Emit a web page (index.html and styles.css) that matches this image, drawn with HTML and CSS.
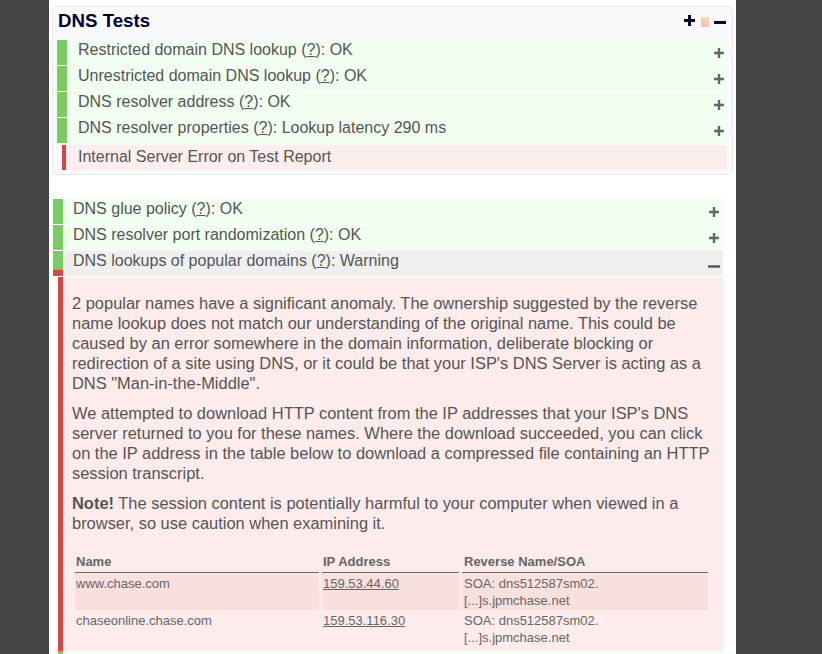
FILE: index.html
```html
<!DOCTYPE html>
<html lang="en">
<head>
    <meta charset="UTF-8">
    <title>DNS Tests</title>
    <link rel="stylesheet" href="styles.css">
</head>
<body>
<div class="page">
    <div class="panel">
        <div class="panel-head">
            <h2>DNS Tests</h2>
            <div class="tools">
                <svg class="tool-plus" width="11" height="11" viewBox="0 0 11 11"><path d="M0 5.5H11M5.5 0V11" stroke="#000033" stroke-width="3"/></svg>
                <span class="tool-box"></span>
                <svg class="tool-minus" width="12" height="3" viewBox="0 0 12 3"><path d="M0 1.5H12" stroke="#000033" stroke-width="3"/></svg>
            </div>
        </div>
        <div class="row ok">
            <span class="label">Restricted domain DNS lookup (<a href="#">?</a>): OK</span>
            <svg class="toggle" width="10" height="10" viewBox="0 0 10 10"><path d="M0 5H10M5 0V10" stroke="#666" stroke-width="2.4"/></svg>
        </div>
        <div class="row ok">
            <span class="label">Unrestricted domain DNS lookup (<a href="#">?</a>): OK</span>
            <svg class="toggle" width="10" height="10" viewBox="0 0 10 10"><path d="M0 5H10M5 0V10" stroke="#666" stroke-width="2.4"/></svg>
        </div>
        <div class="row ok">
            <span class="label">DNS resolver address (<a href="#">?</a>): OK</span>
            <svg class="toggle" width="10" height="10" viewBox="0 0 10 10"><path d="M0 5H10M5 0V10" stroke="#666" stroke-width="2.4"/></svg>
        </div>
        <div class="row ok">
            <span class="label">DNS resolver properties (<a href="#">?</a>): Lookup latency 290 ms</span>
            <svg class="toggle" width="10" height="10" viewBox="0 0 10 10"><path d="M0 5H10M5 0V10" stroke="#666" stroke-width="2.4"/></svg>
        </div>
        <div class="row err">
            <span class="label">Internal Server Error on Test Report</span>
        </div>
    </div>

    <div class="list">
        <div class="row ok">
            <span class="label">DNS glue policy (<a href="#">?</a>): OK</span>
            <svg class="toggle" width="10" height="10" viewBox="0 0 10 10"><path d="M0 5H10M5 0V10" stroke="#666" stroke-width="2.4"/></svg>
        </div>
        <div class="row ok">
            <span class="label">DNS resolver port randomization (<a href="#">?</a>): OK</span>
            <svg class="toggle" width="10" height="10" viewBox="0 0 10 10"><path d="M0 5H10M5 0V10" stroke="#666" stroke-width="2.4"/></svg>
        </div>
        <div class="row open">
            <span class="label">DNS lookups of popular domains (<a href="#">?</a>): Warning</span>
            <svg class="toggle minus" width="12" height="3" viewBox="0 0 12 3"><path d="M0 1.5H12" stroke="#555" stroke-width="2.4"/></svg>
        </div>
        <div class="detail">
            <p>2 popular names have a significant anomaly. The ownership suggested by the reverse name lookup does not match our understanding of the original name. This could be caused by an error somewhere in the domain information, deliberate blocking or redirection of a site using DNS, or it could be that your ISP's DNS Server is acting as a DNS "Man-in-the-Middle".</p>
            <p>We attempted to download HTTP content from the IP addresses that your ISP's DNS server returned to you for these names. Where the download succeeded, you can click on the IP address in the table below to download a compressed file containing an HTTP session transcript.</p>
            <p><b>Note!</b> The session content is potentially harmful to your computer when viewed in a browser, so use caution when examining it.</p>
            <table class="results">
                <tr>
                    <th class="c-name">Name</th>
                    <th class="c-ip">IP Address</th>
                    <th class="c-rev">Reverse Name/SOA</th>
                </tr>
                <tr class="odd">
                    <td>www.chase.com</td>
                    <td><a href="#">159.53.44.60</a></td>
                    <td>SOA: dns512587sm02.<br>[...]s.jpmchase.net</td>
                </tr>
                <tr>
                    <td>chaseonline.chase.com</td>
                    <td><a href="#">159.53.116.30</a></td>
                    <td>SOA: dns512587sm02.<br>[...]s.jpmchase.net</td>
                </tr>
            </table>
        </div>
        <div class="row ok tail"></div>
    </div>
</div>
</body>
</html>
```

FILE: styles.css
```css
*{
    margin: 0;
    padding: 0;
    box-sizing: border-box;
}
html, body{
    background: #444444;
    height: 100%;
}
body{
    font-family: "Liberation Sans", Arial, sans-serif;
    font-size: 16px;
    color: #555555;
}
a{
    color: #555555;
}
.page{
    background: #ffffff;
    width: 687px;
    margin-left: 49px;
    min-height: 100%;
    padding: 6px 0 0 0;
    overflow: hidden;
}
.panel{
    margin: 0 3px;
    border: 1px solid #e8e8ee;
    border-radius: 6px;
    background: #fafafc;
    padding: 0 5px 4px 4px;
}
.panel-head{
    display: flex;
    align-items: flex-start;
    height: 33px;
}
.panel-head h2{
    font-size: 18.7px;
    line-height: 28px;
    color: #000033;
    padding-left: 1px;
    flex: 1;
}
.tools{
    display: flex;
    align-items: flex-start;
    padding-top: 7px;
    padding-right: 1px;
}
.tool-plus{
    margin-top: 1px;
}
.tool-box{
    width: 8px;
    height: 10px;
    margin: 3px 5px 0 6px;
    background: linear-gradient(#fcd9a4, #f1bdbd);
}
.tool-minus{
    margin-top: 7px;
}
.row{
    display: flex;
    height: 25px;
    line-height: 20px;
    margin-bottom: 1px;
    border-left: 10px solid #7acc62;
}
.row .label{
    flex: 1;
    padding-left: 11px;
    white-space: nowrap;
}
.row .toggle{
    margin: 8px 3px 0 0;
}
.row.ok{
    background: #f1fff0;
}
.row.err{
    margin: 2px 0 0 5px;
    border-left: 4px solid #d9444a;
    background: #fdeeee;
    padding-top: 2px;
}
.row.err .label{
    padding-left: 12px;
}
.list{
    margin: 24px 13px 0 4px;
}
.list .row .label{
    padding-left: 10px;
}
.list .row .toggle{
    margin-right: 4px;
}
.row.open{
    border-left: none;
    padding-left: 10px;
    background-image: linear-gradient(#7acc62 19px, #d9444a 19px);
    background-size: 10px 100%;
    background-repeat: no-repeat;
    background-color: #efefef;
}
.row.open .toggle.minus{
    margin: 14px 3px 0 0;
}
.detail{
    margin-left: 5px;
    border-left: 5px solid #d9444a;
    background: #fdeceb;
    padding: 16px 12px 3.5px 9px;
    font-size: 16.45px;
    line-height: 20px;
}
.detail p{
    margin-bottom: 10px;
}
.results{
    border-collapse: separate;
    border-spacing: 3px 1px;
    margin-top: 17.5px;
    font-size: 13px;
    line-height: 17px;
    color: #666666;
}
.results th{
    text-align: left;
    font-weight: bold;
    padding: 1px 1px 2px 1px;
    border-bottom: 1px solid #666666;
}
.results td{
    vertical-align: top;
    padding: 1px;
}
.results td a{
    color: #666666;
}
.results .c-name{
    width: 244px;
}
.results .c-ip{
    width: 137px;
}
.results .c-rev{
    width: 246px;
    padding-left: 2px;
}
.results td:last-child{
    padding-left: 2px;
}
.results tr.odd td{
    background: #f8e1dc;
}
.row.tail{
    margin-left: 5px;
    border-left-width: 5px;
}
```
